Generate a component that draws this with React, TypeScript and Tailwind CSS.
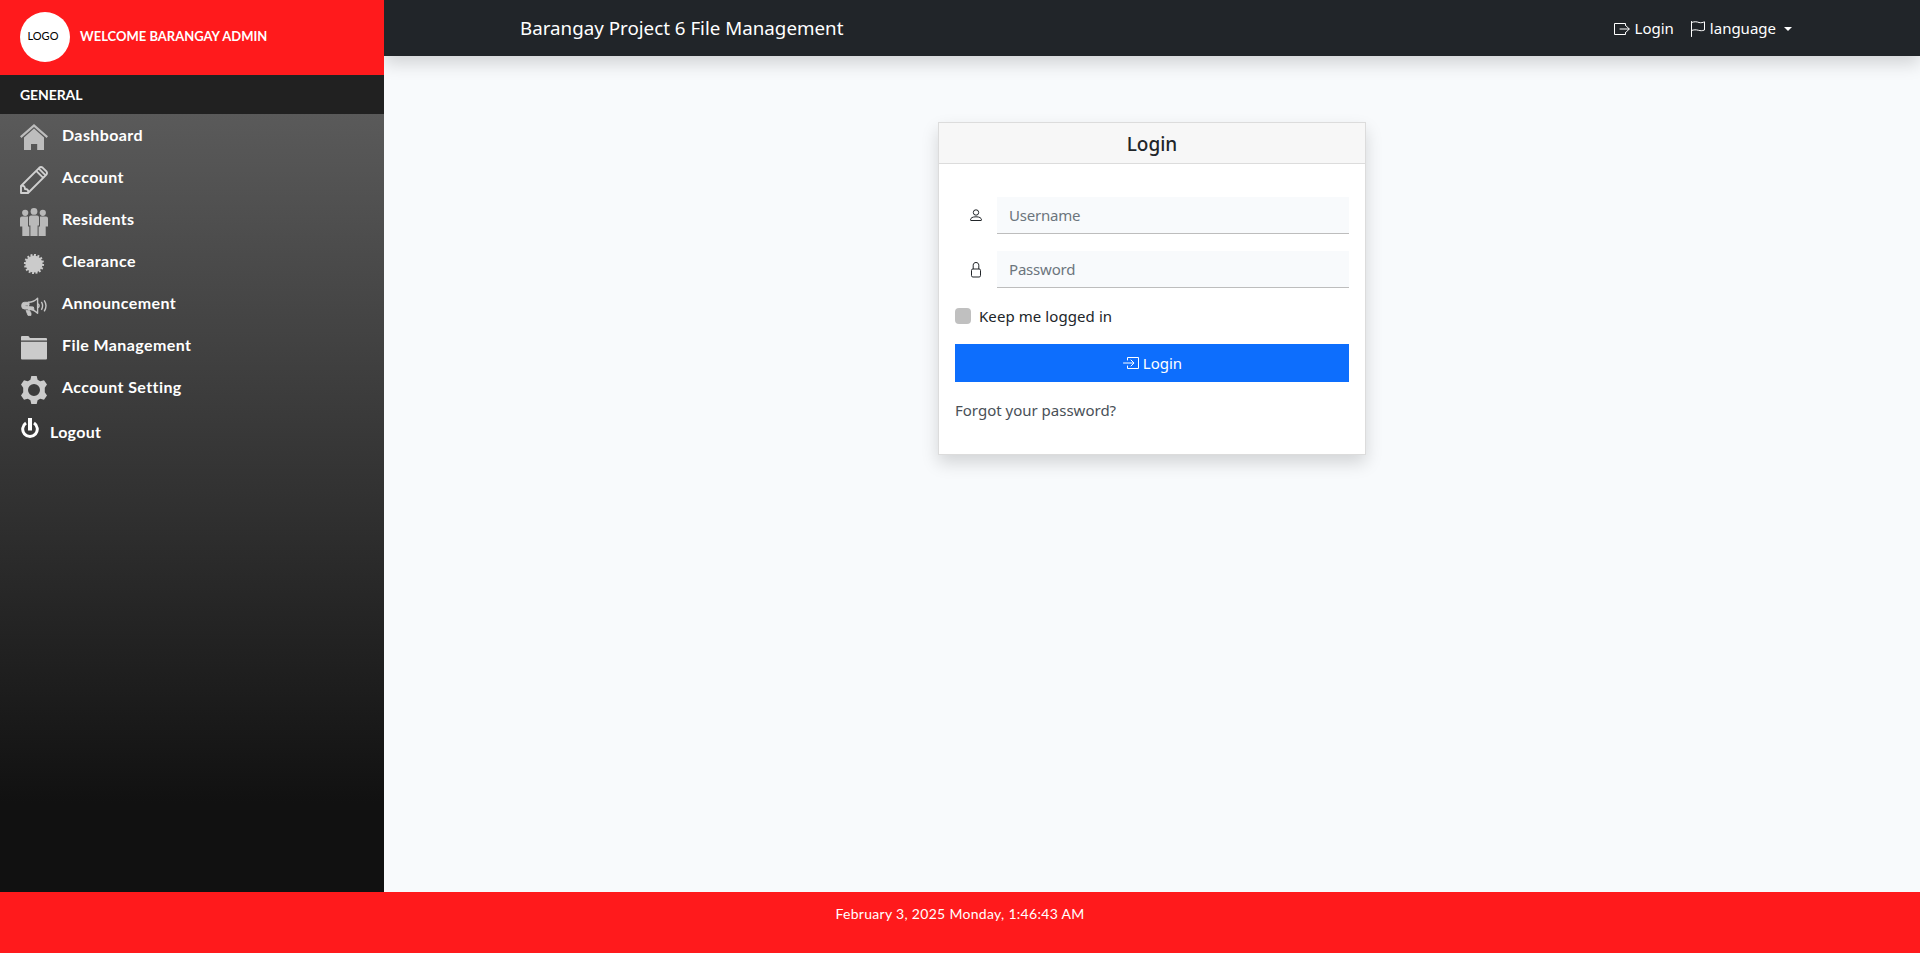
import React from "react";

type IconProps = { className?: string };

const HomeIcon = () => (
  <svg className="size-7 fill-[#bdbdbd]" viewBox="0 0 28 28">
    <path d="M14 0 28 12.3 26.6 14 14 3 1.4 14 0 12.3z" />
    <path d="M14 4.6 24 13.4V26H17.2V20H11V26H4V13.4z" />
  </svg>
);

const PencilIcon = () => (
  <svg className="size-7 fill-none stroke-[#d0d0d0]" viewBox="0 0 28 28" strokeWidth="1.9" strokeLinejoin="round">
    <path d="M1 27V20L19.2 1.8Q21 .2 22.8 1.8L26.2 5.2Q27.8 7 26.2 8.8L8 27zM16.2 4.8 23.2 11.8M18.6 2.4 25.6 9.4M1 20Q5 19 5 23 9 23 8 27" />
  </svg>
);

const PeopleIcon = () => (
  <svg className="size-7 fill-[#b9b9b9]" viewBox="0 0 28 28">
    <circle cx="14" cy="3.4" r="3.4" />
    <circle cx="5.2" cy="4.8" r="3.1" />
    <circle cx="22.8" cy="4.8" r="3.1" />
    <path d="M11 7.4H17Q19 7.4 19 9.4V17.5H17.6V28H10.4V17.5H9V9.4Q9 7.4 11 7.4z" />
    <path d="M2 8.4H8V18.5H9.4V28H2.3V18.5H0V10.4Q0 8.4 2 8.4z" />
    <path d="M26 8.4H20V18.5H18.6V28H25.7V18.5H28V10.4Q28 8.4 26 8.4z" />
  </svg>
);

const SealIcon = () => (
  <svg className="size-7 fill-[#cbcbcb] stroke-[#cbcbcb]" viewBox="0 0 28 28">
    <circle cx="14" cy="14" r="8.6" stroke="none" />
    <circle cx="14" cy="14" r="9" fill="none" strokeWidth="2.2" pathLength="32" strokeDasharray="1.1 .9" />
  </svg>
);

const MegaphoneIcon = () => (
  <svg className="size-7 fill-none stroke-[#c4c4c4]" viewBox="0 0 28 28" strokeWidth="1.4" strokeLinejoin="round">
    <path d="M8.5 10.3C12 10.3 15 9 17.6 6.3V21.3C15 18.4 12 17.2 8.5 17.2z" />
    <path className="fill-[#c4c4c4]" d="M8.8 10.3H4.5A2.7 3.2 0 0 0 4.5 17H9L14 17.6 13.4 15 5 14.5 5 13.2 9 13z" strokeWidth="1" />
    <path className="fill-[#c4c4c4]" d="M6 18.4H9.5L11 21V23.4H8z" strokeWidth=".8" />
    <path d="M18.2 11.8Q20 13.8 18.2 15.8M21.4 9.8Q23.8 13.8 21.4 17.8M24.2 8.3Q27.8 13.8 24.2 19.3" />
  </svg>
);

const FolderIcon = () => (
  <svg className="size-7 fill-[#cbcbcb]" viewBox="0 0 28 28">
    <path d="M1 6.6V3Q1 2 2 2H8Q9.2 2 9.8 4H26Q27 4 27 5V6.6z" />
    <path d="M1 7.8H27V24.6Q27 25.6 26 25.6H2Q1 25.6 1 24.6z" />
  </svg>
);

const GearIcon = () => (
  <svg className="size-7 fill-[#cbcbcb]" viewBox="0 0 28 28">
    <path
      fillRule="evenodd"
      d="M11.3 0H16.7L17.6 3.8 20.2 5.2 24 4.2 27 8.6 24.8 11.8V16.2L27 19.4 24 23.8 20.2 22.8 17.6 24.2 16.7 28H11.3L10.4 24.2 7.8 22.8 4 23.8 1 19.4 3.2 16.2V11.8L1 8.6 4 4.2 7.8 5.2 10.4 3.8zM14 8A6 6 0 1 0 14 20 6 6 0 1 0 14 8z"
    />
  </svg>
);

const PowerIcon = () => (
  <svg className="h-5 w-[18px] fill-none stroke-white" viewBox="0 0 18 20">
    <path d="M5 5A7.3 7.3 0 1 0 13 5" strokeWidth="3" />
    <path d="M9 0V12.5" strokeWidth="4" />
  </svg>
);

const BoxArrowIcon = ({ className = "" }: IconProps) => (
  <svg className={`size-4 fill-none stroke-current ${className}`} viewBox="0 0 16 16" strokeLinecap="round" strokeLinejoin="round">
    <path d="M11.5 4.5V2.5H.5V13.5H11.5V11.5M12.2 5 15.3 8 12.2 11M6 8H15" />
  </svg>
);

const BoxArrowInIcon = ({ className = "" }: IconProps) => (
  <svg className={`size-4 fill-none stroke-current ${className}`} viewBox="0 0 16 16" strokeLinecap="round" strokeLinejoin="round">
    <path d="M4.5 5V2.5H15.5V13.5H4.5V11M8 5 11 8 8 11M.5 8H10.7" />
  </svg>
);

const FlagIcon = ({ className = "" }: IconProps) => (
  <svg className={`size-4 fill-none stroke-current ${className}`} viewBox="0 0 16 16" strokeLinecap="round" strokeLinejoin="round">
    <path d="M1.5 .5V15.5M1.5 1.5C5 .2 7 .8 9 1.5 11 2.1 13 1.4 14.5 .8V9C12 10 10.5 9.8 8.5 9.3 6 8.6 4 8.6 1.5 9.5" />
  </svg>
);

const PersonIcon = () => (
  <svg className="size-4 fill-none stroke-current" viewBox="0 0 16 16">
    <circle cx="8" cy="4.5" r="2.7" />
    <path d="M3 12.5H13Q13.6 12.5 13.5 11.8C13.3 9.8 11.5 8.8 8 8.8S2.7 9.8 2.5 11.8Q2.4 12.5 3 12.5z" />
  </svg>
);

const LockIcon = () => (
  <svg className="size-4 fill-none stroke-current" viewBox="0 0 16 16">
    <rect x="3.5" y="7" width="9" height="8" rx="1.4" />
    <path d="M5.2 7V3.2C5.2 1.4 6.5 .5 8 .5S10.8 1.4 10.8 3.2V7" />
  </svg>
);

const menu = [
  { label: "Dashboard", Icon: HomeIcon },
  { label: "Account", Icon: PencilIcon },
  { label: "Residents", Icon: PeopleIcon },
  { label: "Clearance", Icon: SealIcon },
  { label: "Announcement", Icon: MegaphoneIcon },
  { label: "File Management", Icon: FolderIcon },
  { label: "Account Setting", Icon: GearIcon },
];

function Sidebar() {
  return (
    <aside className="relative z-10 flex w-96 shrink-0 flex-col bg-[linear-gradient(#666,#111_90%)] font-['Lato',sans-serif] font-bold text-white">
      <div className="flex h-[75px] items-center bg-[#ff1a1c] pl-5">
        <div className="mt-[-1px] flex size-[50px] items-center justify-center rounded-full bg-white pr-1 pb-px text-[11px] font-normal text-black">
          <span>LOGO</span>
        </div>
        <span className="mt-[-1px] ml-2.5 text-[13px]">WELCOME BARANGAY ADMIN</span>
      </div>
      <div className="flex h-[39px] items-center bg-[#212121] pl-5 text-[14px] tracking-[-0.1px]">
        <span>GENERAL</span>
      </div>
      <nav className="flex flex-col pt-[9px] pl-5">
        {menu.map(({ label, Icon }) => (
          <a key={label} className="flex h-[42px] items-start gap-3.5">
            <span className="pt-px"><Icon /></span>
            <span className="text-[16px] leading-6 tracking-[0.4px]">{label}</span>
          </a>
        ))}
        <a className="flex h-[42px] items-start gap-[11px] pl-px">
          <span className="pt-px"><PowerIcon /></span>
          <span className="pt-[3px] text-[16px] leading-6 tracking-[0.3px]">Logout</span>
        </a>
      </nav>
    </aside>
  );
}

function Field({ icon, placeholder }: { icon: React.ReactNode; placeholder: string }) {
  return (
    <div className="flex h-[37px]">
      <span className="flex w-[42px] items-center justify-end pr-[13px]">{icon}</span>
      <input
        className="min-w-0 grow border-b border-[#bdbdbd] bg-[#f8fafc] px-3 text-[15px] tracking-[-0.2px] text-[#6c757d] outline-none placeholder:text-[#6c757d]"
        placeholder={placeholder}
      />
    </div>
  );
}

function LoginCard() {
  return (
    <section className="mt-[66px] h-[333px] w-[428px] border border-[#dcdcdc] bg-white shadow-[0_8px_16px_rgba(0,0,0,0.15)]">
      <h5 className="flex h-[41px] items-center justify-center border-b border-[#dcdcdc] bg-[#f7f7f7] pt-0.5 text-[19px] font-medium">
        Login
      </h5>
      <form className="flex flex-col px-4 pt-[33px]">
        <div className="flex flex-col gap-[17px]">
          <Field icon={<PersonIcon />} placeholder="Username" />
          <Field icon={<LockIcon />} placeholder="Password" />
        </div>
        <label className="mt-4 flex h-6 items-center gap-2">
          <span className="size-4 rounded-[4px] bg-[#c0c0c0]" />
          <span className="tracking-[0.08px]">Keep me logged in</span>
        </label>
        <button type="button" className="mt-4 flex h-[38px] items-center justify-center gap-1 bg-[#0d6efd] pl-px text-white">
          <BoxArrowInIcon />
          <span>Login</span>
        </button>
        <a className="mt-4 leading-6 text-[#495057]">Forgot your password?</a>
      </form>
    </section>
  );
}

export default function App() {
  return (
    <div className="flex h-[953px] w-[1920px] flex-col overflow-hidden bg-[#f8fafc] font-['Noto_Sans','Open_Sans',sans-serif] text-[15px] text-[#212529]">
      <div className="flex h-[892px] overflow-hidden">
        <Sidebar />
        <main className="flex min-w-0 grow flex-col">
          <header className="flex h-14 shrink-0 items-center justify-between bg-[#212529] pt-px pr-[128px] pl-[136px] text-white shadow-[0_8px_16px_rgba(0,0,0,0.15)]">
            <span className="text-[18.75px]">Barangay Project 6 File Management</span>
            <div className="flex items-center">
              <a className="flex items-center gap-[5px]">
                <BoxArrowIcon />
                <span>Login</span>
              </a>
              <a className="ml-4 flex items-center">
                <FlagIcon />
                <span className="ml-1">language</span>
                <span className="ml-2 border-x-4 border-t-4 border-x-transparent border-t-white" />
              </a>
            </div>
          </header>
          <div className="flex justify-center">
            <LoginCard />
          </div>
        </main>
      </div>
      <footer className="flex h-[61px] items-start justify-center bg-[#ff1a1c] pt-3 font-['Lato',sans-serif] text-[14px] leading-[20px] tracking-[0.3px] text-white">
        <span>February 3, 2025 Monday, 1:46:43 AM</span>
      </footer>
    </div>
  );
}
